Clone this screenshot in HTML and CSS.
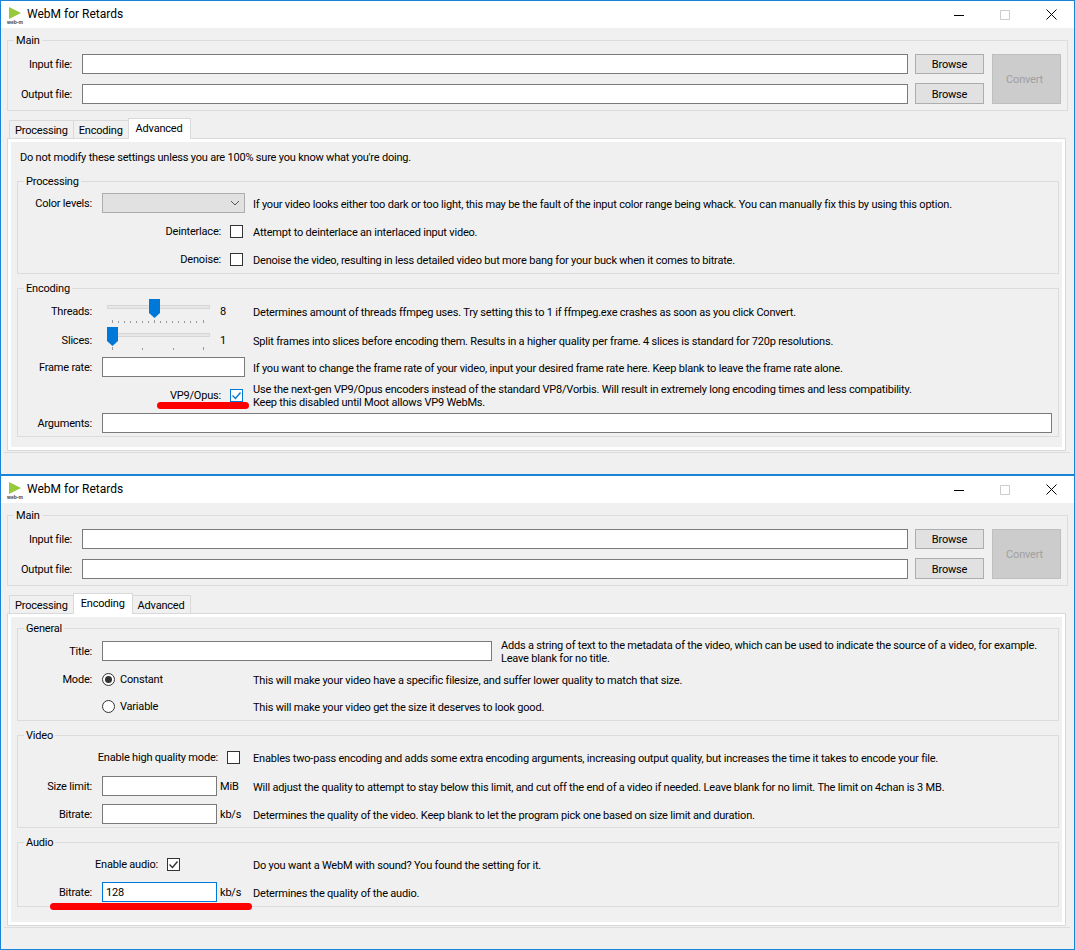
FILE: index.html
```html
<!DOCTYPE html>
<html lang="en">
<head>
    <meta charset="UTF-8">
    <meta name="viewport" content="width=device-width, initial-scale=1.0">
    <title>WebM for Retards</title>
    <link rel="stylesheet" href="styles.css">
</head>
<body>
    <!-- advanced tab -->
    <div class="window">
        <div class="titlebar">
            <svg class="app-icon" width="18" height="18" viewBox="0 0 18 18"><path d="M3 1 L15 7 L3 13 Z" fill="#97c93c"/><text x="1" y="17.5" class="icon-text">web-m</text></svg>
            <span class="app-title">WebM for Retards</span>
            <div class="win-buttons">
                <span class="win-btn"><svg width="10" height="10" viewBox="0 0 10 10"><path d="M0 5.5 H10" stroke="#000"/></svg></span>
                <span class="win-btn"><svg width="10" height="10" viewBox="0 0 10 10"><path d="M.5 .5 H9.5 V9.5 H.5 Z" stroke="#ccc" fill="none"/></svg></span>
                <span class="win-btn"><svg width="11" height="11" viewBox="0 0 11 11"><path d="M.5 .5 L10.5 10.5 M10.5 .5 L.5 10.5" stroke="#000"/></svg></span>
            </div>
        </div>
        <div class="content">
            <fieldset class="main-box">
                <legend>Main</legend>
                <div class="main-grid">
                    <label>Input file:</label>
                    <input type="text" class="field">
                    <button class="btn">Browse</button>
                    <button class="btn btn-convert" disabled>Convert</button>
                    <label>Output file:</label>
                    <input type="text" class="field">
                    <button class="btn">Browse</button>
                </div>
            </fieldset>
            <div class="tabs-area">
                <div class="tab-strip">
                    <span class="tab">Processing</span>
                    <span class="tab">Encoding</span>
                    <span class="tab active">Advanced</span>
                </div>
                <div class="panel">
                    <div class="tab-page">
                        <p class="note">Do not modify these settings unless you are 100% sure you know what you're doing.</p>
                        <fieldset>
                            <legend>Processing</legend>
                            <div class="row">
                                <label>Color levels:</label>
                                <div class="select"><svg width="10" height="6" viewBox="0 0 10 6"><path d="M1 1 L5 5 L9 1" stroke="#555" fill="none"/></svg></div>
                                <span class="desc">If your video looks either too dark or too light, this may be the fault of the input color range being whack. You can manually fix this by using this option.</span>
                            </div>
                            <div class="row row-check">
                                <div class="check-cell"><label>Deinterlace:</label><span class="check"></span></div>
                                <span class="desc">Attempt to deinterlace an interlaced input video.</span>
                            </div>
                            <div class="row row-check">
                                <div class="check-cell"><label>Denoise:</label><span class="check"></span></div>
                                <span class="desc">Denoise the video, resulting in less detailed video but more bang for your buck when it comes to bitrate.</span>
                            </div>
                        </fieldset>
                        <fieldset>
                            <legend>Encoding</legend>
                            <div class="row row-tall">
                                <label>Threads:</label>
                                <div class="slider-cell">
                                    <svg width="112" height="30" viewBox="0 0 112 30">
                                        <rect x="5.5" y="9.5" width="102" height="3" fill="#e7e7e7" stroke="#d6d6d6"/>
                                        <path d="M47 3 H58 V17 L52.5 22 L47 17 Z" fill="#0078d7"/>
                                        <path d="M10.5 24 v3 M16.5 25 v2 M22.5 25 v2 M28.5 25 v2 M34.5 25 v2 M40.5 25 v2 M46.5 25 v2 M52.5 24 v3 M58.5 25 v2 M64.5 25 v2 M70.5 25 v2 M76.5 25 v2 M82.5 25 v2 M88.5 25 v2 M94.5 25 v2 M101.5 24 v3" stroke="#999"/>
                                    </svg>
                                    <span class="slider-value">8</span>
                                </div>
                                <span class="desc">Determines amount of threads ffmpeg uses. Try setting this to 1 if ffmpeg.exe crashes as soon as you click Convert.</span>
                            </div>
                            <div class="row">
                                <label>Slices:</label>
                                <div class="slider-cell">
                                    <svg width="112" height="28" viewBox="0 0 112 28">
                                        <rect x="5.5" y="7.5" width="102" height="3" fill="#e7e7e7" stroke="#d6d6d6"/>
                                        <path d="M5 1 H16 V15 L10.5 20 L5 15 Z" fill="#0078d7"/>
                                        <path d="M10.5 21 v3 M40.5 22 v2 M71.5 22 v2 M101.5 21 v3" stroke="#999"/>
                                    </svg>
                                    <span class="slider-value">1</span>
                                </div>
                                <span class="desc">Split frames into slices before encoding them. Results in a higher quality per frame. 4 slices is standard for 720p resolutions.</span>
                            </div>
                            <div class="row row-short">
                                <label>Frame rate:</label>
                                <input type="text" class="field">
                                <span class="desc">If you want to change the frame rate of your video, input your desired frame rate here. Keep blank to leave the frame rate alone.</span>
                            </div>
                            <div class="row row-check row-tall">
                                <div class="check-cell"><label>VP9/Opus:</label><span class="check check-blue"><svg width="11" height="11" viewBox="0 0 11 11"><path d="M1.5 5.5 L4.5 8.5 L9.5 2.5" stroke="#0078d7" stroke-width="1.4" fill="none"/></svg></span></div>
                                <span class="desc">Use the next-gen VP9/Opus encoders instead of the standard VP8/Vorbis. Will result in extremely long encoding times and less compatibility.<br>Keep this disabled until Moot allows VP9 WebMs.</span>
                            </div>
                            <div class="row row-short row-full">
                                <label>Arguments:</label>
                                <input type="text" class="field">
                            </div>
                        </fieldset>
                    </div>
                </div>
            </div>
        </div>
        <span class="scribble scribble-vp9"></span>
    </div>

    <!-- encoding tab -->
    <div class="window">
        <div class="titlebar">
            <svg class="app-icon" width="18" height="18" viewBox="0 0 18 18"><path d="M3 1 L15 7 L3 13 Z" fill="#97c93c"/><text x="1" y="17.5" class="icon-text">web-m</text></svg>
            <span class="app-title">WebM for Retards</span>
            <div class="win-buttons">
                <span class="win-btn"><svg width="10" height="10" viewBox="0 0 10 10"><path d="M0 5.5 H10" stroke="#000"/></svg></span>
                <span class="win-btn"><svg width="10" height="10" viewBox="0 0 10 10"><path d="M.5 .5 H9.5 V9.5 H.5 Z" stroke="#ccc" fill="none"/></svg></span>
                <span class="win-btn"><svg width="11" height="11" viewBox="0 0 11 11"><path d="M.5 .5 L10.5 10.5 M10.5 .5 L.5 10.5" stroke="#000"/></svg></span>
            </div>
        </div>
        <div class="content">
            <fieldset class="main-box">
                <legend>Main</legend>
                <div class="main-grid">
                    <label>Input file:</label>
                    <input type="text" class="field">
                    <button class="btn">Browse</button>
                    <button class="btn btn-convert" disabled>Convert</button>
                    <label>Output file:</label>
                    <input type="text" class="field">
                    <button class="btn">Browse</button>
                </div>
            </fieldset>
            <div class="tabs-area">
                <div class="tab-strip">
                    <span class="tab">Processing</span>
                    <span class="tab active">Encoding</span>
                    <span class="tab">Advanced</span>
                </div>
                <div class="panel">
                    <div class="tab-page">
                        <fieldset>
                            <legend>General</legend>
                            <div class="row row-tall row-title">
                                <label>Title:</label>
                                <input type="text" class="field">
                                <span class="desc">Adds a string of text to the metadata of the video, which can be used to indicate the source of a video, for example.<br>Leave blank for no title.</span>
                            </div>
                            <div class="row row-short">
                                <label>Mode:</label>
                                <div class="radio-cell"><span class="radio on"></span><span>Constant</span></div>
                                <span class="desc">This will make your video have a specific filesize, and suffer lower quality to match that size.</span>
                            </div>
                            <div class="row">
                                <label></label>
                                <div class="radio-cell"><span class="radio"></span><span>Variable</span></div>
                                <span class="desc">This will make your video get the size it deserves to look good.</span>
                            </div>
                        </fieldset>
                        <fieldset>
                            <legend>Video</legend>
                            <div class="row row-check">
                                <div class="check-cell check-hq"><label>Enable high quality mode:</label><span class="check"></span></div>
                                <span class="desc">Enables two-pass encoding and adds some extra encoding arguments, increasing output quality, but increases the time it takes to encode your file.</span>
                            </div>
                            <div class="row row-tall">
                                <label>Size limit:</label>
                                <div class="unit-cell"><input type="text" class="field"><span>MiB</span></div>
                                <span class="desc">Will adjust the quality to attempt to stay below this limit, and cut off the end of a video if needed. Leave blank for no limit. The limit on 4chan is 3 MB.</span>
                            </div>
                            <div class="row row-short">
                                <label>Bitrate:</label>
                                <div class="unit-cell"><input type="text" class="field"><span>kb/s</span></div>
                                <span class="desc">Determines the quality of the video. Keep blank to let the program pick one based on size limit and duration.</span>
                            </div>
                        </fieldset>
                        <fieldset>
                            <legend>Audio</legend>
                            <div class="row row-check">
                                <div class="check-cell check-audio"><label>Enable audio:</label><span class="check"><svg width="11" height="11" viewBox="0 0 11 11"><path d="M1.5 5.5 L4.5 8.5 L9.5 2.5" stroke="#333" stroke-width="1.4" fill="none"/></svg></span></div>
                                <span class="desc">Do you want a WebM with sound? You found the setting for it.</span>
                            </div>
                            <div class="row">
                                <label>Bitrate:</label>
                                <div class="unit-cell"><input type="text" class="field field-focus" value="128"><span>kb/s</span></div>
                                <span class="desc">Determines the quality of the audio.</span>
                            </div>
                        </fieldset>
                    </div>
                </div>
            </div>
        </div>
        <span class="scribble scribble-bitrate"></span>
    </div>
</body>
</html>
```

FILE: styles.css
```css
* {
    box-sizing: border-box;
}
body {
    margin: 0;
    font-family: Roboto, "Noto Sans", sans-serif;
    font-size: 11px;
    letter-spacing: -0.2px;
    line-height: 16px;
    color: #000;
    background: #f0f0f0;
}
.window {
    position: relative;
    height: 475px;
    border: 1px solid #1883d7;
    background: #f0f0f0;
}
.titlebar {
    display: flex;
    align-items: center;
    height: 27px;
    padding-left: 5px;
    background: #fff;
}
.app-icon {
    flex: none;
}
.icon-text {
    font-family: "Liberation Sans", sans-serif;
    font-size: 5px;
    font-weight: bold;
    letter-spacing: 0;
    fill: #444;
}
.app-title {
    margin-left: 3px;
    padding-bottom: 2px;
    font-size: 12px;
    letter-spacing: 0;
}
.win-buttons {
    display: flex;
    margin-left: auto;
}
.win-btn {
    display: flex;
    align-items: center;
    justify-content: center;
    width: 46px;
    height: 27px;
}
.content {
    padding: 4px 6px 0;
}
fieldset {
    margin: 0;
    padding: 0;
    min-width: 0;
    border: 1px solid #dcdcdc;
}
fieldset + fieldset {
    margin-top: 6px;
}
legend {
    margin-left: 6px;
    padding: 0 2px;
    line-height: 16px;
    transform: translateY(1px);
}
.main-grid {
    display: grid;
    grid-template-columns: 66px 825px 69px 69px;
    grid-template-rows: 20px 21px;
    column-gap: 8px;
    row-gap: 9px;
    padding: 6px 0 6px;
    align-items: center;
}
.main-grid label {
    padding: 2px 2px 0 0;
    text-align: right;
}
.main-grid .field {
    width: 826px;
}
.field {
    display: block;
    width: 100%;
    height: 20px;
    margin: 0;
    padding: 1px 3px 0;
    border: 1px solid #7a7a7a;
    border-radius: 0;
    outline: none;
    background: #fff;
    font: inherit;
    letter-spacing: inherit;
    color: #000;
}
.field-focus {
    border-color: #0078d7;
}
.btn {
    height: 100%;
    padding: 2px 0 0;
    border: 1px solid #adadad;
    border-radius: 0;
    background: #e1e1e1;
    font: inherit;
    letter-spacing: inherit;
    color: #000;
}
.btn-convert {
    grid-column: 4;
    grid-row: 1 / 3;
    padding-right: 4px;
    border-color: #bfbfbf;
    background: #cccccc;
    color: #a0a0a0;
}
.tabs-area {
    margin: 7px -2px 0 -3px;
    padding: 0 4px 1px 3px;
    border-bottom: 1px solid #dcdcdc;
}
.tab-strip {
    display: flex;
    align-items: flex-end;
    height: 20px;
    padding-left: 2px;
}
.tab {
    height: 18px;
    padding: 0 5px;
    border: 1px solid #d9d9d9;
    border-bottom: none;
    margin-right: -1px;
    line-height: 20px;
}
.tab.active {
    position: relative;
    z-index: 1;
    height: 21px;
    margin-bottom: -1px;
    padding: 0 7px;
    background: #fff;
    line-height: 20px;
}
.panel {
    height: 313px;
    border: 1px solid #d9d9d9;
}
.tab-page {
    height: 100%;
    padding: 3px 3px 0 6px;
    border: 3px solid #fff;
}
.note {
    margin: 5px 0 7px 3px;
}
.row {
    display: grid;
    grid-template-columns: 74px 145px 1fr;
    column-gap: 8px;
    align-items: center;
    height: 28px;
}
.row label {
    padding-top: 2px;
    text-align: right;
}
.row > :nth-child(2) {
    margin-left: 2px;
    width: 143px;
}
.row-tall {
    height: 30px;
}
.row-short {
    height: 26px;
}
.row-check {
    grid-template-columns: 227px 1fr;
}
.row-check > :nth-child(2) {
    width: auto;
    margin-left: 0;
}
.row-title {
    grid-template-columns: 74px 393px 1fr;
}
.row > .field {
    justify-self: start;
}
.row-title > :nth-child(2) {
    width: 390px;
}
.row-full {
    grid-template-columns: 74px 1fr;
}
.row-full > :nth-child(2) {
    width: 950px;
}
.desc {
    padding-top: 2px;
    line-height: 13px;
    white-space: nowrap;
}
.select {
    display: flex;
    align-items: center;
    justify-content: flex-end;
    height: 20px;
    padding-right: 4px;
    border: 1px solid #adadad;
    background: #e1e1e1;
}
.check-cell {
    display: flex;
    align-items: center;
    justify-content: flex-end;
    gap: 9px;
    padding-right: 2px;
}
.check-hq {
    padding-right: 5px;
}
.check-audio {
    padding-right: 65px;
}
.check {
    display: flex;
    align-items: center;
    justify-content: center;
    width: 13px;
    height: 13px;
    border: 1px solid #333;
    background: #fff;
}
.check-blue {
    border-color: #0078d7;
}
.slider-cell {
    display: flex;
    align-items: center;
}
.slider-cell svg {
    flex: none;
}
.slider-value {
    margin-left: 6px;
    padding-top: 2px;
}
.unit-cell {
    display: flex;
    align-items: center;
    gap: 3px;
}
.unit-cell span {
    padding-top: 2px;
}
.unit-cell .field {
    flex: none;
    width: 115px;
}
.radio-cell {
    display: flex;
    align-items: center;
    gap: 5px;
}
.radio-cell span:last-child {
    padding-top: 1px;
}
.radio {
    display: flex;
    align-items: center;
    justify-content: center;
    width: 13px;
    height: 13px;
    border: 1px solid #333;
    border-radius: 50%;
    background: #fff;
}
.radio.on::after {
    content: "";
    width: 7px;
    height: 7px;
    border-radius: 50%;
    background: #333;
}
.scribble {
    position: absolute;
    height: 7px;
    border-radius: 4px;
    background: #f00;
}
.scribble-vp9 {
    left: 156px;
    top: 401px;
    width: 92px;
}
.scribble-bitrate {
    left: 49px;
    top: 427px;
    width: 202px;
}
```
